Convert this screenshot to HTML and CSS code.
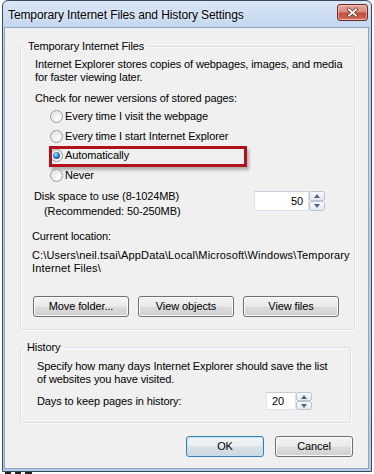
FILE: index.html
```html
<!DOCTYPE html>
<html>
<head>
<meta charset="utf-8">
<title>Temporary Internet Files and History Settings</title>
<link rel="stylesheet" href="styles.css">
</head>
<body>
<div class="window">
  <div class="titlebar">
    <span class="title">Temporary Internet Files and History Settings</span>
    <span class="close">
      <svg width="31" height="17" viewBox="0 0 31 17">
        <path d="M11.5 5 L19.5 12 M19.5 5 L11.5 12" stroke="#5a2420" stroke-width="3.6" stroke-linecap="round"/>
        <path d="M11.5 5 L19.5 12 M19.5 5 L11.5 12" stroke="#ffffff" stroke-width="2" stroke-linecap="round"/>
      </svg>
    </span>
  </div>
  <div class="client">
    <fieldset class="group group-tif">
      <legend>Temporary Internet Files</legend>
      <div class="gbody">
        <p class="desc">Internet Explorer stores copies of webpages, images, and media<br>for faster viewing later.</p>
        <p class="check">Check for newer versions of stored pages:</p>
        <ul class="radios">
          <li class="opt"><span class="radio"></span><span class="opt-text">Every time I visit the webpage</span></li>
          <li class="opt"><span class="radio"></span><span class="opt-text">Every time I start Internet Explorer</span></li>
          <li class="opt"><span class="radio checked"></span><span class="opt-text">Automatically</span><span class="highlight"></span></li>
          <li class="opt"><span class="radio"></span><span class="opt-text">Never</span></li>
        </ul>
        <div class="disk">
          <div class="disk-label">
            <div>Disk space to use (8-1024MB)</div>
            <div class="rec">(Recommended: 50-250MB)</div>
          </div>
          <div class="spin spin-disk">
            <span class="spin-field">50</span>
            <span class="spin-btns"><span class="sb"><i class="arr up"></i></span><span class="sb"><i class="arr down"></i></span></span>
          </div>
        </div>
        <p class="loc-label">Current location:</p>
        <p class="path">C:\Users\neil.tsai\AppData\Local\Microsoft\Windows\Temporary<br>Internet Files\</p>
        <div class="btn-row">
          <button class="btn">Move folder...</button>
          <button class="btn">View objects</button>
          <button class="btn">View files</button>
        </div>
      </div>
    </fieldset>

    <fieldset class="group group-hist">
      <legend>History</legend>
      <div class="hbody">
        <p class="hdesc">Specify how many days Internet Explorer should save the list<br>of websites you have visited.</p>
        <div class="days">
          <span class="days-label">Days to keep pages in history:</span>
          <div class="spin spin-days">
            <span class="spin-field">20</span>
            <span class="spin-btns"><span class="sb"><i class="arr up"></i></span><span class="sb"><i class="arr down"></i></span></span>
          </div>
        </div>
      </div>
    </fieldset>

    <div class="dlg-buttons">
      <button class="btn btn-default">OK</button>
      <button class="btn">Cancel</button>
    </div>
  </div>
</div>
<div class="under"></div>
</body>
</html>
```

FILE: styles.css
```css
* { box-sizing: border-box; }

html, body {
  margin: 0;
  padding: 0;
  background: #ffffff;
  height: 474px;
  overflow: hidden;
}

body {
  font-family: "Liberation Sans", Arial, sans-serif;
  font-size: 11px;
  line-height: 13px;
  color: #000;
  letter-spacing: -0.1px;
}

p { margin: 0; }

.window {
  margin-left: 2px;
  width: 370px;
  height: 472px;
  border: 1px solid #3a4a5e;
  border-radius: 6px 6px 0 0;
  background: linear-gradient(to bottom, #d9e6f6 0px, #c4d7ef 26px, #b9cfea 60px, #b4cbe8 100%);
  display: flex;
  flex-direction: column;
}

.titlebar {
  height: 26px;
  flex: none;
  display: flex;
  justify-content: space-between;
  align-items: flex-start;
  padding-left: 5px;
}

.title {
  font-size: 12px;
  line-height: 14px;
  margin-top: 7px;
  color: #000;
  letter-spacing: -0.1px;
  text-shadow: 0 0 4px rgba(255,255,255,0.9);
}

.close {
  width: 31px;
  height: 17px;
  margin-top: 3px;
  margin-right: 3px;
  border: 1px solid #6e2a25;
  border-radius: 3px;
  background: linear-gradient(to bottom, #e9a99b 0%, #d88a7b 45%, #c4503f 55%, #c9604e 85%, #dd8f7d 100%);
  box-shadow: inset 0 0 0 1px rgba(255,220,210,0.5);
  display: flex;
  align-items: center;
  justify-content: center;
}
.close svg { display: block; }

.client {
  flex: 1;
  margin: 0 2px 2px 1px;
  border: 1px solid #8ea6c4;
  background: #f0f0f0;
  display: flex;
  flex-direction: column;
}

.group {
  margin: 0 0 0 15px;
  border: 1px solid #d5dfe5;
  border-radius: 3px;
  box-shadow: inset 1px 1px 0 #fbfbfb, 1px 1px 0 #fbfbfb;
  min-inline-size: 0;
}
.group legend {
  padding: 0 3px;
  line-height: 13px;
}

.group-tif {
  margin-top: 12px;
  width: 335px;
  padding: 0 0 12px 4px;
}

.gbody { padding-left: 8px; }

.desc { margin: 5px 0 0 2px; }
.check { margin: 8px 0 0 2px; }

.radios {
  list-style: none;
  margin: 2px 0 0 17px;
  padding: 0;
}
.opt {
  position: relative;
  height: 19.5px;
  display: flex;
  align-items: center;
}
.opt-text { margin-left: 2px; }

.radio {
  width: 13px;
  height: 13px;
  border-radius: 50%;
  border: 1px solid #9a9a9a;
  background: radial-gradient(circle at 65% 70%, #ffffff 0%, #eeeeee 45%, #d2d2d2 100%);
  box-shadow: inset 0 0 0 1px #f4f4f4;
  flex: none;
  display: flex;
  align-items: center;
  justify-content: center;
}
.radio.checked::after {
  content: "";
  width: 7px;
  height: 7px;
  border-radius: 50%;
  background: radial-gradient(circle at 40% 35%, #b9ecff 0%, #3f9ae0 35%, #13508f 75%, #0c2f5a 100%);
}

.highlight {
  position: absolute;
  left: -1px;
  top: 0;
  width: 198px;
  height: 21px;
  border: 3px solid #b2101b;
  box-shadow: 2px 3px 3px rgba(0,0,0,0.28);
  pointer-events: none;
}

.disk {
  margin-top: 4px;
  display: flex;
  justify-content: space-between;
  align-items: flex-start;
  padding-right: 29px;
}
.disk-label {
  margin-left: 1px;
  line-height: 14.5px;
}
.rec { padding-left: 10px; }

.spin {
  display: flex;
}
.spin-disk {
  height: 20px;
  margin-top: 2px;
}
.spin-field {
  background: #fff;
  border: 1px solid #dfe4ea;
  border-top-color: #c9ced6;
  display: flex;
  align-items: center;
}
.spin-disk .spin-field {
  width: 55px;
  justify-content: flex-end;
  padding-right: 5px;
}
.spin-btns {
  width: 16px;
  display: flex;
  flex-direction: column;
  background: #fff;
}
.sb {
  flex: 1;
  border: 1px solid #bcc6d3;
  border-radius: 2px;
  background: linear-gradient(to bottom, #f7f8fa, #e4e8ee);
  display: flex;
  align-items: center;
  justify-content: center;
}
.arr {
  width: 0;
  height: 0;
  border-left: 3.5px solid transparent;
  border-right: 3.5px solid transparent;
}
.arr.up { border-bottom: 4px solid #50638a; }
.arr.down { border-top: 4px solid #50638a; }

.loc-label { margin: 12px 0 0 -1px; }
.path {
  margin: 5.5px 0 0 -1px;
  white-space: nowrap;
  letter-spacing: 0.15px;
}

.btn-row {
  margin-top: 21.5px;
  display: flex;
  gap: 9px;
}

.btn {
  height: 21px;
  width: 96px;
  padding: 0;
  font: inherit;
  letter-spacing: -0.1px;
  color: #000;
  border: 1px solid #707070;
  border-radius: 3px;
  background: linear-gradient(to bottom, #f2f2f2 0%, #ebebeb 48%, #dddddd 52%, #cfcfcf 100%);
  box-shadow: inset 0 0 0 1px #fbfbfb;
}

.group-hist {
  margin-top: 11px;
  width: 331px;
  padding: 0 0 12px 3px;
}
.hbody { padding-left: 13px; }
.hdesc { margin-top: 6px; }

.days {
  margin-top: 6px;
  display: flex;
  align-items: center;
  height: 18px;
}
.days-label { flex: 0 0 229px; }
.spin-days { height: 18px; }
.spin-days .spin-field {
  width: 30px;
  padding-left: 5px;
}

.dlg-buttons {
  margin-top: 13px;
  display: flex;
  justify-content: flex-end;
  gap: 11px;
  padding-right: 15px;
}
.dlg-buttons .btn { width: 78px; }
.btn-default {
  border-color: #3c7fb1;
  box-shadow: inset 0 0 0 1px #bfe4f8;
  background: linear-gradient(to bottom, #f1f5f8 0%, #e9eef2 48%, #d9e1e7 52%, #cdd7df 100%);
}

.under {
  margin: 0 0 0 5px;
  width: 27px;
  height: 2px;
  background: linear-gradient(to right, #222 0 6px, transparent 6px 10px, #222 10px 16px, transparent 16px 20px, #222 20px 27px);
}
```
